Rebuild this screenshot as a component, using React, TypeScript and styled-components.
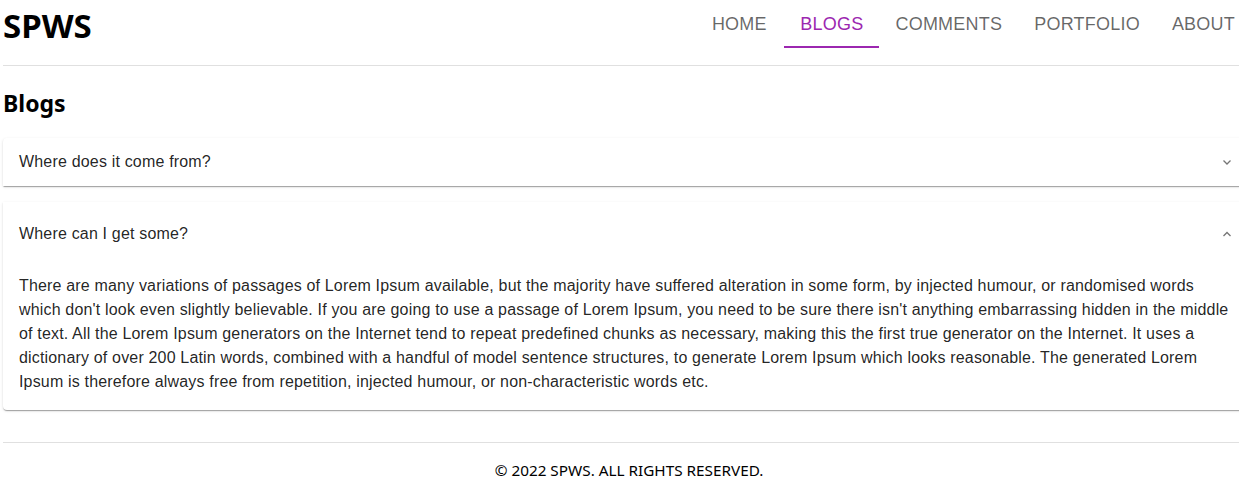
import React from "react";
import styled, { createGlobalStyle } from "styled-components";

const Global = createGlobalStyle`
  html, body { margin: 0; padding: 0; background: #fff; overflow: hidden; }
  body { font-family: "Liberation Sans", Arial, sans-serif; }
`;

const Page = styled.div`
  width: 1252px;
  margin-left: 3px;
`;

const Header = styled.header`
  display: flex;
  align-items: center;
  justify-content: space-between;
  height: 48px;
  padding-bottom: 17px;
  border-bottom: 1px solid #e0e0e0;
`;

const Logo = styled.div`
  font-family: "Noto Sans", "Open Sans", sans-serif;
  font-weight: 700;
  font-size: 33px;
  line-height: 48px;
  padding-top: 3px;
  color: #000;
`;

const Nav = styled.nav`
  display: flex;
  height: 48px;
  margin-right: 4px;
`;

const Tab = styled.div<{ $active?: boolean }>`
  position: relative;
  min-width: 90px;
  padding: 0 16px;
  box-sizing: border-box;
  display: flex;
  align-items: center;
  justify-content: center;
  font-family: "Liberation Sans", Arial, sans-serif;
  font-size: 18px;
  letter-spacing: 0.22px;
  text-transform: uppercase;
  color: ${(p) => (p.$active ? "#9c27b0" : "rgba(0,0,0,0.6)")};
  &::after {
    content: "";
    display: ${(p) => (p.$active ? "block" : "none")};
    position: absolute;
    left: 0;
    right: 0;
    bottom: 0;
    height: 2px;
    background: #9c27b0;
  }
`;

const Title = styled.h2`
  margin: 22px 0 20px;
  font-family: "Noto Sans", "Open Sans", sans-serif;
  font-weight: 700;
  font-size: 23px;
  line-height: 30px;
  color: #000;
`;

const List = styled.div`
  display: flex;
  flex-direction: column;
  gap: 16px;
`;

const Panel = styled.div<{ $first?: boolean; $last?: boolean }>`
  background: #fff;
  color: rgba(0, 0, 0, 0.87);
  box-shadow: 0px 2px 1px -1px rgba(0, 0, 0, 0.2), 0px 1px 1px 0px rgba(0, 0, 0, 0.14),
    0px 1px 3px 0px rgba(0, 0, 0, 0.12);
  border-radius: ${(p) => (p.$first ? "4px 4px 0 0" : p.$last ? "0 0 4px 4px" : "0")};
`;

const Summary = styled.div<{ $open?: boolean }>`
  display: flex;
  align-items: center;
  justify-content: space-between;
  height: ${(p) => (p.$open ? "64px" : "48px")};
  padding: 0 16px;
  font-size: 16px;
  line-height: 24px;
  letter-spacing: 0.18px;
`;

const Chevron = styled.svg`
  width: 10px;
  height: 10px;
  margin-right: 7px;
  color: #757575;
`;

const Details = styled.div`
  padding: 8px 16px 16px;
  font-size: 16px;
  line-height: 24px;
  letter-spacing: 0.17px;
  white-space: nowrap;
`;

const Footer = styled.footer`
  margin-top: 32px;
  border-top: 1px solid #e0e0e0;
  padding-top: 15px;
  text-align: center;
  font-family: "Noto Sans", "Open Sans", sans-serif;
  font-size: 15.3px;
  line-height: 24px;
  color: #000;
`;

const ChevronIcon = ({ up }: { up?: boolean }) => (
  <Chevron viewBox="0 0 10 10">
    <polyline
      points={up ? "1.5,7 5,3.5 8.5,7" : "1.5,3.5 5,7 8.5,3.5"}
      fill="none"
      stroke="currentColor"
      strokeWidth="1.3"
    />
  </Chevron>
);

const tabs = ["Home", "Blogs", "Comments", "Portfolio", "About"];

const lines = [
  "There are many variations of passages of Lorem Ipsum available, but the majority have suffered alteration in some form, by injected humour, or randomised words",
  "which don't look even slightly believable. If you are going to use a passage of Lorem Ipsum, you need to be sure there isn't anything embarrassing hidden in the middle",
  "of text. All the Lorem Ipsum generators on the Internet tend to repeat predefined chunks as necessary, making this the first true generator on the Internet. It uses a",
  "dictionary of over 200 Latin words, combined with a handful of model sentence structures, to generate Lorem Ipsum which looks reasonable. The generated Lorem",
  "Ipsum is therefore always free from repetition, injected humour, or non-characteristic words etc.",
];

export default function App() {
  return (
    <Page>
      <Global />
      <Header>
        <Logo>SPWS</Logo>
        <Nav>
          {tabs.map((t) => (
            <Tab key={t} $active={t === "Blogs"}>
              {t}
            </Tab>
          ))}
        </Nav>
      </Header>
      <Title>Blogs</Title>
      <List>
        <Panel $first>
          <Summary>
            <span>Where does it come from?</span>
            <ChevronIcon />
          </Summary>
        </Panel>
        <Panel $last>
          <Summary $open>
            <span>Where can I get some?</span>
            <ChevronIcon up />
          </Summary>
          <Details>
            {lines.map((l, i) => (
              <React.Fragment key={i}>
                {l}
                {i < lines.length - 1 && <br />}
              </React.Fragment>
            ))}
          </Details>
        </Panel>
      </List>
      <Footer>© 2022 SPWS. ALL RIGHTS RESERVED.</Footer>
    </Page>
  );
}
